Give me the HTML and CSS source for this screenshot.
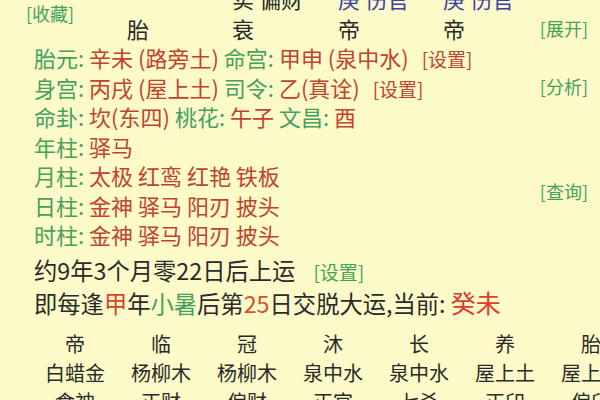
FILE: index.html
```html
<!DOCTYPE html>
<html lang="zh-CN">
<head>
<meta charset="utf-8">
<title>命盘</title>
<link rel="stylesheet" href="styles.css">
</head>
<body>
<div class="upper">
  <div class="main">
    <div class="head">
      <div class="fav"><span class="btn green">[收藏]</span></div>
      <div class="hc r1 c3 dark">实 偏财</div>
      <div class="hc r1 c4 blue">庚 伤官</div>
      <div class="hc r1 c5 blue">庚 伤官</div>
      <div class="hc r2 c2 dark">胎</div>
      <div class="hc r2 c3 dark">衰</div>
      <div class="hc r2 c4 dark">帝</div>
      <div class="hc r2 c5 dark">帝</div>
    </div>
    <div class="row"><span class="lab">胎元:</span> <span class="val">辛未 (路旁土)</span> <span class="lab">命宫:</span> <span class="val">甲申 (泉中水)</span> <span class="set red">[设置]</span></div>
    <div class="row"><span class="lab">身宫:</span> <span class="val">丙戌 (屋上土)</span> <span class="lab">司令:</span> <span class="val">乙(真诠)</span> <span class="set red">[设置]</span></div>
    <div class="row"><span class="lab">命卦:</span> <span class="val">坎(东四)</span> <span class="lab">桃花:</span> <span class="val">午子</span> <span class="lab">文昌:</span> <span class="val">酉</span></div>
    <div class="row"><span class="lab">年柱:</span> <span class="val">驿马</span></div>
    <div class="row"><span class="lab">月柱:</span> <span class="val">太极 红鸾 红艳 铁板</span></div>
    <div class="row"><span class="lab">日柱:</span> <span class="val">金神 驿马 阳刃 披头</span></div>
    <div class="row"><span class="lab">时柱:</span> <span class="val">金神 驿马 阳刃 披头</span></div>
  </div>
  <div class="side">
    <span class="btn green b1">[展开]</span>
    <span class="btn green b2">[分析]</span>
    <span class="btn green b3">[查询]</span>
  </div>
</div>
<div class="lower">
  <div class="line">约9年3个月零22日后上运<span class="set green gap">[设置]</span></div>
  <div class="line">即每逢<span class="hl-red">甲</span>年<span class="hl-green">小暑</span>后第<span class="hl-num">25</span>日交脱大运,当前: <span class="cur">癸未</span></div>
</div>
<div class="grid">
  <div>帝</div><div>临</div><div>冠</div><div>沐</div><div>长</div><div>养</div><div>胎</div>
  <div>白蜡金</div><div>杨柳木</div><div>杨柳木</div><div>泉中水</div><div>泉中水</div><div>屋上土</div><div>屋上土</div>
  <div>食神</div><div>正财</div><div>偏财</div><div>正官</div><div>七杀</div><div>正印</div><div>偏印</div>
</div>
</body>
</html>
```
FILE: styles.css
```css
html, body {
  margin: 0;
  padding: 0;
  overflow: hidden;
}
body {
  width: 600px;
  height: 400px;
  background: #fcfac8;
  font-family: "Noto Sans CJK SC", "Noto Sans", sans-serif;
  color: #2a2a2a;
  font-size: 22px;
}
.green { color: #46a05e; }
.red { color: #bb4632; }
.blue { color: #3b3fa8; }
.dark { color: #2a2a2a; }

.upper {
  display: grid;
  grid-template-columns: 1fr auto;
  height: 267px;
  margin-top: -17px;
}
.head {
  display: grid;
  grid-template-columns: 127px 105px 106px 105px;
  grid-template-rows: 30px 30px;
  height: 60px;
  line-height: 30px;
}
.fav {
  grid-row: 1 / 3;
  grid-column: 1;
  padding-left: 26px;
  padding-top: 18px;
}
.hc { white-space: nowrap; height: 30px; }
.r1 { grid-row: 1; }
.r2 { grid-row: 2; }
.c2 { grid-column: 2; }
.c3 { grid-column: 3; }
.c4 { grid-column: 4; }
.c5 { grid-column: 5; }

.btn {
  font-size: 18px;
  line-height: 24px;
  height: 24px;
  display: block;
}
.row {
  height: 29.5px;
  line-height: 29px;
  padding-left: 34px;
  white-space: nowrap;
}
.lab { color: #46a05e; }
.val { color: #c0432f; }
.set {
  font-size: 19px;
  line-height: 20px;
}
.row .set { margin-left: 8px; }
.side {
  display: flex;
  flex-direction: column;
  align-items: flex-end;
  padding-right: 12px;
}
.b1 { margin-top: 33px; }
.b2 { margin-top: 34px; }
.b3 { margin-top: 81px; }

.lower {
  padding-left: 34px;
  padding-top: 4px;
  font-size: 23.3px;
}
.line {
  height: 33px;
  line-height: 33px;
  white-space: nowrap;
}
.gap { margin-left: 18px; }
.hl-red { color: #d9432e; }
.hl-green { color: #3fa060; }
.hl-num { color: #d2512f; }
.cur {
  color: #e23a2e;
  font-size: 25px;
  line-height: 25px;
}
.grid {
  display: grid;
  grid-template-columns: repeat(7, 86px);
  grid-auto-rows: 29px;
  line-height: 29px;
  padding-left: 32px;
  margin-top: 9px;
  font-size: 20px;
  text-align: center;
  white-space: nowrap;
}
```
